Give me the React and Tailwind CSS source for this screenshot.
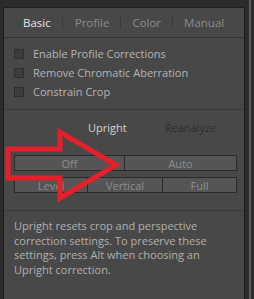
import React from "react";

const font = { fontFamily: '"Open Sans", "Liberation Sans", sans-serif' };

function Check({ label }) {
  return (
    <div className="flex items-center h-[19px]">
      <div className="w-[10px] h-[10px] bg-[#3c3c3c] border border-[#2e2e2e] ml-[10px]" />
      <span className="ml-[9px] text-[11px] text-[#b4b4b4] leading-none">{label}</span>
    </div>
  );
}

function Btn({ children, className = "" }) {
  return (
    <div className={"h-[16px] flex items-center justify-center bg-[#555555] border border-[#2a2a2a] text-[11px] text-[#8e8e8e] leading-none " + className}>
      {children}
    </div>
  );
}

export default function App() {
  return (
    <div className="w-[254px] h-[299px] bg-[#2b2b2b] flex overflow-hidden relative" style={font}>
      <div className="ml-[3px] mt-[7px] w-[242px] h-[300px] border border-[#1f1f1f] bg-[#484848] flex flex-col">
        <div className="h-[30px] border-b border-[#333333] flex items-center text-[11.5px] leading-none">
          <span className="ml-[19px] text-[#e6e6e6]">Basic</span>
          <span className="ml-[11px] w-px h-[12px] bg-[#3a3a3a]" />
          <span className="ml-[12px] text-[#8c8c8c]">Profile</span>
          <span className="ml-[11px] w-px h-[12px] bg-[#3a3a3a]" />
          <span className="ml-[11px] text-[#8c8c8c]">Color</span>
          <span className="ml-[11px] w-px h-[12px] bg-[#3a3a3a]" />
          <span className="ml-[11px] text-[#8c8c8c]">Manual</span>
        </div>
        <div className="pt-[6px] flex flex-col">
          <Check label="Enable Profile Corrections" />
          <Check label="Remove Chromatic Aberration" />
          <Check label="Constrain Crop" />
        </div>
        <div className="mt-[8px] border-t border-[#3a3a3a]" />
        <div className="h-[34px] flex items-center text-[11px] leading-none">
          <span className="ml-[84px] text-[#d4d4d4]">Upright</span>
          <span className="ml-[38px] text-[#2e2e2e]">Reanalyze</span>
        </div>
        <div className="mt-[11px] ml-[10px] w-[223px] flex flex-col gap-[6px]">
          <div className="flex">
            <Btn className="w-[111px]">Off</Btn>
            <Btn className="flex-1 -ml-px">Auto</Btn>
          </div>
          <div className="flex">
            <Btn className="w-[74px]">Level</Btn>
            <Btn className="w-[76px] -ml-px">Vertical</Btn>
            <Btn className="flex-1 -ml-px">Full</Btn>
          </div>
        </div>
        <div className="mt-[17px] border-t border-[#3a3a3a]" />
        <p className="mt-[8px] ml-[10px] mr-[20px] text-[11px] leading-[14.5px] text-[#b0b0b0]">
          Upright resets crop and perspective correction settings. To preserve these settings, press Alt when choosing an Upright correction.
        </p>
      </div>
      <div className="ml-[4px] w-[2px] h-full bg-[#5e5e5e]" />
      <svg className="absolute left-0 top-0" width="254" height="299" viewBox="0 0 254 299">
        <polygon
          points="8,149 60,149 60,132 116,165 60,198 60,178 8,178"
          fill="none"
          stroke="#e4202a"
          strokeWidth="5"
          strokeLinejoin="miter"
        />
      </svg>
    </div>
  );
}
